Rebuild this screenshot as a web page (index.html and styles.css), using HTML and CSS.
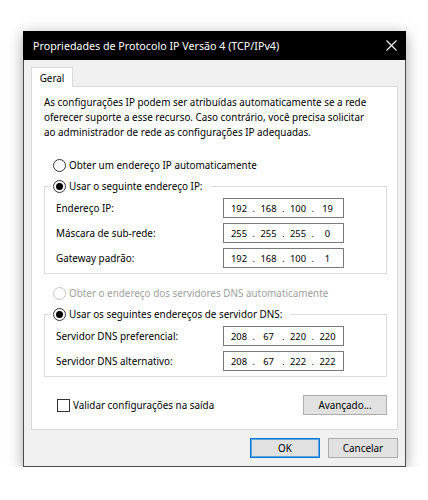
FILE: index.html
```html
<!DOCTYPE html>
<html lang="pt">
<head>
  <meta charset="UTF-8">
  <title>Propriedades de Protocolo IP Versão 4 (TCP/IPv4)</title>
  <link rel="stylesheet" href="styles.css">
</head>
<body>
  <div class="dialog">
    <div class="titlebar">
      <span class="title">Propriedades de Protocolo IP Versão 4 (TCP/IPv4)</span>
      <svg class="close" width="11" height="11" viewBox="0 0 11 11">
        <path d="M0.5 0.5 L10.5 10.5 M10.5 0.5 L0.5 10.5" stroke="#fff" stroke-width="1.1" fill="none"/>
      </svg>
    </div>
    <div class="content">
      <div class="tabs">
        <div class="tab">Geral</div>
      </div>
      <div class="panel">
        <p class="intro">As configurações IP podem ser atribuídas automaticamente se a rede<br>
          oferecer suporte a esse recurso. Caso contrário, você precisa solicitar<br>
          ao administrador de rede as configurações IP adequadas.</p>

        <div class="radio-line first">
          <span class="radio"></span>Obter um endereço IP automaticamente
        </div>
        <fieldset class="group">
          <legend><span class="radio checked"></span>Usar o seguinte endereço IP:</legend>
          <div class="row">
            <span class="label">Endereço IP:</span>
            <div class="ip"><span>192</span><i>.</i><span>168</span><i>.</i><span>100</span><i>.</i><span>19</span></div>
          </div>
          <div class="row">
            <span class="label">Máscara de sub-rede:</span>
            <div class="ip"><span>255</span><i>.</i><span>255</span><i>.</i><span>255</span><i>.</i><span>0</span></div>
          </div>
          <div class="row">
            <span class="label">Gateway padrão:</span>
            <div class="ip"><span>192</span><i>.</i><span>168</span><i>.</i><span>100</span><i>.</i><span>1</span></div>
          </div>
        </fieldset>

        <div class="radio-line disabled">
          <span class="radio"></span>Obter o endereço dos servidores DNS automaticamente
        </div>
        <fieldset class="group dns">
          <legend><span class="radio checked"></span>Usar os seguintes endereços de servidor DNS:</legend>
          <div class="row">
            <span class="label">Servidor DNS preferencial:</span>
            <div class="ip"><span>208</span><i>.</i><span>67</span><i>.</i><span>220</span><i>.</i><span>220</span></div>
          </div>
          <div class="row">
            <span class="label">Servidor DNS alternativo:</span>
            <div class="ip"><span>208</span><i>.</i><span>67</span><i>.</i><span>222</span><i>.</i><span>222</span></div>
          </div>
        </fieldset>

        <div class="bottom">
          <div class="check-line"><span class="checkbox"></span>Validar configurações na saída</div>
          <button class="btn advanced">Avançado...</button>
        </div>
      </div>
      <div class="actions">
        <button class="btn default">OK</button>
        <button class="btn">Cancelar</button>
      </div>
    </div>
  </div>
</body>
</html>
```
FILE: styles.css
```css
body {
  margin: 0;
  background: #fff;
  font-family: "Noto Sans", "Open Sans", sans-serif;
  font-size: 9.9px;
  color: #000;
}
.dialog {
  margin: 31px 0 0 23px;
  width: 381px;
  border: 1px solid #4a4a4a;
  border-top: none;
  background: #f0f0f0;
  box-shadow: 0 3px 14px rgba(0, 0, 0, 0.35);
}
.titlebar {
  height: 29px;
  margin: 0 -1px;
  background: #000;
  color: #fff;
  display: flex;
  align-items: center;
  justify-content: space-between;
  padding: 0 9px 0 10px;
}
.title {
  font-size: 10.7px;
}
.content {
  padding: 7px 7px 8px 7px;
}
.tabs {
  display: flex;
}
.tab {
  width: 40px;
  height: 19px;
  line-height: 20px;
  text-align: center;
  background: #fff;
  border: 1px solid #d9d9d9;
  border-bottom: none;
  margin-bottom: -1px;
  position: relative;
  z-index: 1;
}
.panel {
  background: #fff;
  border: 1px solid #d9d9d9;
  height: 342px;
  padding: 0 10px 0 12px;
}
.intro {
  margin: 8px 0 0 0;
  line-height: 15px;
}
.radio-line {
  display: flex;
  align-items: center;
  height: 15px;
  line-height: 15px;
  padding-left: 9px;
}
.radio-line.first {
  margin-top: 18px;
}
.radio-line.disabled {
  margin-top: 12px;
  color: #a0a0a0;
}
.radio {
  width: 11px;
  height: 11px;
  border: 1px solid #333;
  border-radius: 50%;
  margin-right: 3px;
  background: #fff;
  display: inline-flex;
  align-items: center;
  justify-content: center;
  flex-shrink: 0;
}
.radio.checked::after {
  content: "";
  width: 7px;
  height: 7px;
  border-radius: 50%;
  background: #000;
}
.disabled .radio {
  border-color: #c8c8c8;
}
.group {
  margin: 6px 0 0 0;
  padding: 0 0 5px 11px;
  border: 1px solid #dcdcdc;
  min-width: 0;
}
.group legend {
  display: flex;
  align-items: center;
  padding: 0 8px 0 2px;
  margin-left: -5px;
  line-height: 15px;
}
.row {
  display: flex;
  align-items: center;
  justify-content: space-between;
  height: 20px;
  margin-top: 5px;
  padding-right: 42px;
}
.row:first-of-type {
  margin-top: 4px;
}
.ip {
  width: 116px;
  height: 18px;
  border: 1px solid #7a7a7a;
  display: flex;
  align-items: center;
  padding-left: 3px;
  font-size: 9.4px;
}
.ip span {
  width: 24px;
  text-align: center;
}
.ip i {
  font-style: normal;
  width: 5.5px;
  text-align: center;
}
.bottom {
  display: flex;
  align-items: center;
  justify-content: space-between;
  margin-top: 18px;
  padding-left: 13px;
}
.check-line {
  display: flex;
  align-items: center;
}
.checkbox {
  width: 11px;
  height: 11px;
  border: 1px solid #333;
  background: #fff;
  margin-right: 3px;
}
.btn {
  font-family: inherit;
  font-size: 9.9px;
  height: 20px;
  padding: 0;
  background: #e1e1e1;
  border: 1px solid #adadad;
  color: #000;
}
.advanced {
  width: 84px;
}
.actions {
  display: flex;
  justify-content: flex-end;
  gap: 8px;
  margin-top: 8px;
}
.actions .btn {
  width: 70px;
}
.btn.default {
  border-color: #0078d7;
  box-shadow: inset 0 0 0 1px #5ea4dd;
}
```
